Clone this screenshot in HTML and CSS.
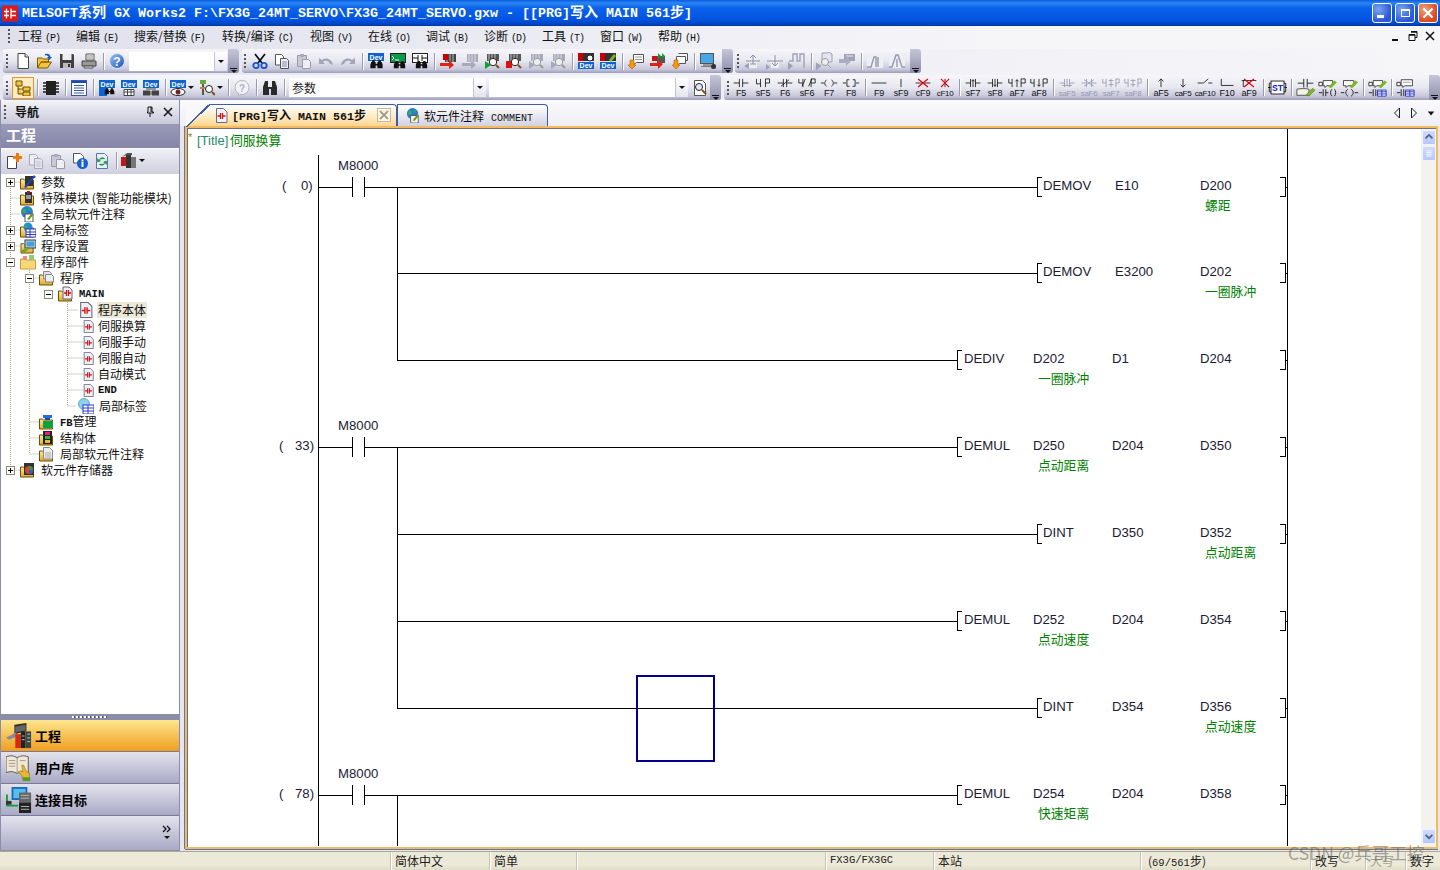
FILE: index.html
```html
<!DOCTYPE html>
<html lang="zh">
<head>
<meta charset="utf-8">
<title>MELSOFT GX Works2</title>
<link rel="stylesheet" href="styles.css">
</head>
<body>
<svg class="sprite" xmlns="http://www.w3.org/2000/svg">
  <defs>
    <linearGradient id="gHelp" x1="0" y1="0" x2="1" y2="1"><stop offset="0" stop-color="#9cc4f4"/><stop offset="1" stop-color="#1450b8"/></linearGradient>
    <linearGradient id="gFold" x1="0" y1="0" x2="0" y2="1"><stop offset="0" stop-color="#ffe9a0"/><stop offset="1" stop-color="#e0a830"/></linearGradient>
    <symbol id="bino" viewBox="0 0 16 16"><path d="M2 8h5v7H1v-4zM9 8h5l1 3v4H9zM3 6h3v2H3zM10 6h3v2h-3zM7 10h2v2H7z" fill="#111"/></symbol>
    <symbol id="devlab" viewBox="0 0 16 16"><rect width="16" height="8" fill="#0d63d0"/><text x="8" y="7" class="svgt dev">Dev</text></symbol>
    <symbol id="new" viewBox="0 0 16 16"><path d="M3 .5h7l3.500 3.500v11.500H3z" fill="#fff" stroke="#444"/><path d="M10 .5V4h3.500" fill="#ddd" stroke="#444"/></symbol>
    <symbol id="open" viewBox="0 0 16 16"><path d="M.5 15V5h5l1 1h5v3H4L.5 15h10l4-6H4" fill="#f5c53d" stroke="#7c5a00"/><path d="M8 1c3-1 5 0 5.500 3H15l-2.500 3L10 4h1.500C11 3 10 2 8 2.500z" fill="#1558c0"/></symbol>
    <symbol id="save" viewBox="0 0 16 16"><path d="M1 1h13l1 1v13H1z" fill="#3f3f3f"/><rect x="3.500" y="1" width="9" height="6" fill="#eee"/><rect x="4" y="10" width="8" height="5" fill="#bbb"/><rect x="9" y="11" width="2" height="3" fill="#333"/></symbol>
    <symbol id="print" viewBox="0 0 16 16"><path d="M5 1h8v6H5z" fill="#fff" stroke="#555"/><path d="M1 8h14v5H1z" fill="#999" stroke="#444"/><path d="M3 13h9v2H3z" fill="#ddd" stroke="#555"/><path d="M6 3h6M6 5h6" stroke="#888"/></symbol>
    <symbol id="help" viewBox="0 0 16 16"><circle cx="8" cy="8" r="7.500" fill="url(#gHelp)" stroke="#dfe8f8"/><text x="8" y="12.500" class="svgt q">?</text></symbol>
    <symbol id="cut" viewBox="0 0 16 16"><path d="M3 1l7 9M13 1L6 10" stroke="#111" stroke-width="1.800" fill="none"/><circle cx="4" cy="12.500" r="2.700" fill="none" stroke="#1a55d0" stroke-width="1.800"/><circle cx="12" cy="12.500" r="2.700" fill="none" stroke="#1a55d0" stroke-width="1.800"/></symbol>
    <symbol id="copy" viewBox="0 0 16 16"><path d="M1.500 1.500h6l2 2V12h-8z" fill="#fff" stroke="#555"/><path d="M6.500 5.500h6l2 2v8h-8z" fill="#eef" stroke="#555"/><path d="M8 9h5M8 11h5M8 13h5" stroke="#88a"/></symbol>
    <symbol id="gcopy" viewBox="0 0 16 16"><path d="M1.500 1.500h6l2 2V12h-8z" fill="#eeeef4" stroke="#a8a8b8"/><path d="M6.500 5.500h6l2 2v8h-8z" fill="#e6e6f0" stroke="#a8a8b8"/><path d="M8 9h5M8 11h5M8 13h5" stroke="#c0c0d0"/></symbol>
    <symbol id="paste" viewBox="0 0 16 16"><path d="M1.500 2.500h9v11h-9z" fill="#c9c9d6" stroke="#9a9aaa"/><path d="M4 1h4v3H4z" fill="#aaaabb"/><path d="M6.500 6.500h6l2 2v7h-8z" fill="#eeeef4" stroke="#9a9aaa"/></symbol>
    <symbol id="undo" viewBox="0 0 16 16"><path d="M1 5v6h6L5 9c2-2 5-2 7 2l3 1c-1-6-7-8-11-5z" fill="#a5a5b8"/></symbol>
    <symbol id="redo" viewBox="0 0 16 16"><path d="M15 5v6H9l2-2c-2-2-5-2-7 2l-3 1c1-6 7-8 11-5z" fill="#a5a5b8"/></symbol>
    <symbol id="devb" viewBox="0 0 16 16"><use href="#devlab" width="16" height="16"/><use href="#bino" x="1" y="2" width="15" height="14"/></symbol>
    <symbol id="termb" viewBox="0 0 16 16"><rect x=".5" y=".5" width="15" height="9" fill="#0a9a4a" stroke="#222"/><path d="M2 3l2 2-2 2M5 7h4" stroke="#fff" fill="none"/><use href="#bino" x="3" y="3" width="13" height="13"/></symbol>
    <symbol id="ladb" viewBox="0 0 16 16"><rect x=".5" y=".5" width="15" height="9" fill="#fff" stroke="#222"/><path d="M1 5h5M6 2v6M10 2v6M10 5h5" stroke="#111" fill="none"/><use href="#bino" x="3" y="3" width="13" height="13"/></symbol>
    <symbol id="rblock" viewBox="0 0 16 16"><rect x="5" y="1" width="11" height="8" fill="#444"/><path d="M7 1v8M10 1v8M13 1v8" stroke="#bbb"/><rect x="3" y="1" width="5" height="6" fill="#c00"/><path d="M0 10h9V7l5 5-5 4v-3H0z" fill="#e02010"/></symbol>
    <symbol id="gblock" viewBox="0 0 16 16"><path d="M5 1h11v8H5zM0 10h9V7l5 5-5 4v-3H0z" fill="#a8a8bc"/><path d="M7 1v8M10 1v8M13 1v8" stroke="#ddd"/></symbol>
    <symbol id="findg" viewBox="0 0 16 16"><rect x="3" y="1" width="12" height="7" fill="#555"/><path d="M5 1v7M8 1v7M11 1v7" stroke="#bbb"/><path d="M1 8l6 4-6 4z" fill="#10a030"/><circle cx="9" cy="9" r="3.700" fill="#fff" stroke="#222"/><path d="M12 12l3 3" stroke="#8a5010" stroke-width="2"/></symbol>
    <symbol id="findr" viewBox="0 0 16 16"><rect x="3" y="1" width="12" height="7" fill="#555"/><path d="M5 1v7M8 1v7M11 1v7" stroke="#bbb"/><rect x="0" y="8" width="6" height="7" fill="#e01010"/><circle cx="9" cy="9" r="3.700" fill="#fff" stroke="#222"/><path d="M12 12l3 3" stroke="#8a5010" stroke-width="2"/></symbol>
    <symbol id="findx" viewBox="0 0 16 16"><path d="M3 1h12v7H3z" fill="#a8a8bc"/><path d="M5 1v7M8 1v7M11 1v7" stroke="#ddd"/><path d="M1 8l6 4-6 4z" fill="#a8a8bc"/><circle cx="9" cy="9" r="3.700" fill="#eee" stroke="#999"/><path d="M12 12l3 3" stroke="#999" stroke-width="2"/></symbol>
    <symbol id="devr" viewBox="0 0 16 16"><rect y="0" width="16" height="8" fill="#333"/><rect width="5" height="8" fill="#c00"/><circle cx="12" cy="5" r="3" fill="#fff" stroke="#222"/><rect y="9" width="16" height="7" fill="#0d63d0"/><text x="8" y="15.300" class="svgt dev">Dev</text></symbol>
    <symbol id="devg" viewBox="0 0 16 16"><rect y="0" width="16" height="8" fill="#333"/><rect width="5" height="8" fill="#c00"/><path d="M9 7l5-6 2 2-5 6z" fill="#7ab820"/><rect y="9" width="16" height="7" fill="#0d63d0"/><text x="8" y="15.300" class="svgt dev">Dev</text></symbol>
    <symbol id="note" viewBox="0 0 16 16"><path d="M5.500 1.500h10v8h-7l-3 2z" fill="#fff" stroke="#555"/><path d="M7 4h7M7 6.500h7" stroke="#999"/><path d="M2 7h4v5h2l-4 4-4-4h2z" fill="#f59a10" stroke="#b56000" stroke-width=".6"/></symbol>
    <symbol id="rarrows" viewBox="0 0 16 16"><rect x="7" y="3" width="8" height="7" fill="#555"/><path d="M8 0l3 3-3 3zM12 0l3 3-3 3z" fill="#10a030"/><rect x="2" y="3" width="5" height="5" fill="#d01010"/><path d="M0 10h8V7l5 4-5 5v-3H0z" fill="#e02010"/></symbol>
    <symbol id="note2" viewBox="0 0 16 16"><path d="M6.500 .5h9v7h-2"  fill="#fff" stroke="#555"/><path d="M4.500 3.500h9v7h-6l-3 2z" fill="#fff" stroke="#555"/><path d="M2 7h4v5h2l-4 4-4-4h2z" fill="#f59a10" stroke="#b56000" stroke-width=".6"/></symbol>
    <symbol id="monitor" viewBox="0 0 16 16"><rect x=".5" y=".5" width="13" height="10" fill="#47a6e6" stroke="#555"/><rect x="3" y="11" width="8" height="2" fill="#999"/><path d="M1 13.500h10" stroke="#777"/><rect x="11" y="11" width="5" height="5" rx="2" fill="#333"/></symbol>
    <symbol id="gl1" viewBox="0 0 18 18"><path d="M5 2h8v14H5z" fill="#eeeef5"/><path d="M0 14l5-3v6z" fill="#a0a0b6"/><path d="M2 9h14M9 3v9M6 6l3-3 3 3M6 12h6" stroke="#8e8ea6" fill="none"/></symbol>
    <symbol id="gl2" viewBox="0 0 18 18"><path d="M5 2h8v14H5z" fill="#eeeef5"/><path d="M1 9h16M9 3v10M6 11l3 3 3-3" stroke="#8e8ea6" fill="none"/><path d="M0 12l4 3-4 3z" fill="#a0a0b6"/></symbol>
    <symbol id="gl3" viewBox="0 0 18 18"><path d="M1 9h4V2h4v7h3V2h4v14" fill="none" stroke="#a0a0b6" stroke-width="1.400"/><path d="M0 10l5 4-5 4z" fill="#a0a0b6"/></symbol>
    <symbol id="gl4" viewBox="0 0 18 18"><path d="M6 1h5l2-1 3 2v8H6z" fill="#e4e4ee" stroke="#a0a0b6"/><circle cx="9" cy="10" r="3.500" fill="#eee" stroke="#999"/><path d="M0 11l5 3-5 4zM12 13l3 3" stroke="#a0a0b6" fill="#a0a0b6"/></symbol>
    <symbol id="gl5" viewBox="0 0 18 18"><path d="M6 2h11v7H6z" fill="#a0a0b6"/><path d="M8 4h7" stroke="#eee"/><path d="M1 7h7V4l5 5-5 5v-3H1z" fill="#acacc0"/></symbol>
    <symbol id="gl6" viewBox="0 0 18 18"><rect x="1" y="1" width="16" height="15" fill="#eeeef5"/><path d="M1 15h4l3-10h2v10M12 15V5" stroke="#9898ae" fill="none" stroke-width="1.400"/></symbol>
    <symbol id="gl7" viewBox="0 0 18 18"><rect x="1" y="1" width="16" height="15" fill="#eeeef5"/><path d="M1 15h3l4-12h2l4 12h3M9 7v8" stroke="#9898ae" fill="none" stroke-width="1.400"/></symbol>
    <symbol id="proj" viewBox="0 0 16 16"><path d="M1 1h6v5H1zM8 7h7v4H8zM8 12h7v4H8zM3 6v8h5M3 9h5" fill="#f5c53d" stroke="#6a5000"/></symbol>
    <symbol id="chip" viewBox="0 0 16 16"><rect x="3" y="1" width="10" height="14" fill="#222"/><path d="M0 3h3M0 6h3M0 9h3M0 12h3M13 3h3M13 6h3M13 9h3M13 12h3" stroke="#222" stroke-width="1.500"/></symbol>
    <symbol id="list" viewBox="0 0 16 16"><rect x=".5" y=".5" width="15" height="15" fill="#fff" stroke="#3858a8"/><rect x="1" y="1" width="14" height="2" fill="#1a49b0"/><path d="M3 5.500h10M3 8h10M3 10.500h10M3 13h10" stroke="#3858a8"/></symbol>
    <symbol id="devb2" viewBox="0 0 16 16"><use href="#devlab" width="16" height="16"/><rect y="8" width="8" height="8" fill="#0d63d0"/><use href="#bino" x="5" y="3" width="11" height="13"/></symbol>
    <symbol id="devt" viewBox="0 0 16 16"><use href="#devlab" width="16" height="16"/><path d="M3 9.500h10v6H3z" fill="#fff" stroke="#444"/><path d="M3 12h10M6.500 9.500v6M10 9.500v6" stroke="#444"/></symbol>
    <symbol id="devn" viewBox="0 0 16 16"><use href="#devlab" width="16" height="16"/><path d="M0 11h7v4H0zM9 11h7v4H9zM3 9h10" fill="#444" stroke="#444"/></symbol>
    <symbol id="deve" viewBox="0 0 16 16"><use href="#devlab" width="16" height="16"/><ellipse cx="8" cy="12" rx="7" ry="3.500" fill="#fff" stroke="#222"/><circle cx="8" cy="12" r="2.500" fill="#722"/></symbol>
    <symbol id="probe" viewBox="0 0 16 16"><rect x="1" y="0" width="6" height="4" fill="#6a4"/><path d="M3 4h2v11H3z" fill="#555"/><rect x="1" y="7" width="6" height="2" fill="#b85"/><circle cx="10" cy="9" r="3.500" fill="#fff" stroke="#222"/><path d="M13 12l3 3" stroke="#7a5010" stroke-width="2"/></symbol>
    <symbol id="ghelp" viewBox="0 0 16 16"><circle cx="8" cy="7.500" r="7" fill="#f2f2f7" stroke="#b4b4c6"/><path d="M5 13l-1 3 4-2" fill="#f2f2f7" stroke="#b4b4c6"/><text x="8" y="11.500" class="svgt gq">?</text></symbol>
    <symbol id="bino2" viewBox="0 0 16 16"><path d="M1 7l2-6h3v6h4V1h3l2 6v8H9V9H7v6H1z" fill="#2a2a2a"/></symbol>
    <symbol id="findp" viewBox="0 0 16 16"><path d="M2.500 .5h8l3 3v12h-11z" fill="#fff" stroke="#555"/><circle cx="7" cy="7" r="3.500" fill="#dfeaff" stroke="#222"/><path d="M10 10l4 4" stroke="#8a5010" stroke-width="2"/></symbol>

    <symbol id="k-c" viewBox="0 0 22 12"><path d="M2 6h7M9 1v10M13 1v10M13 6h7" stroke="#111" fill="none"/></symbol>
    <symbol id="k-n" viewBox="0 0 22 12"><path d="M3 1v6h5M8 1v10M14 1v10M14 1h5v5h-5" stroke="#111" fill="none"/></symbol>
    <symbol id="k-p" viewBox="0 0 22 12"><path d="M2 6h7M9 1v10M13 1v10M13 6h7M6 10l10-8" stroke="#111" fill="none"/></symbol>
    <symbol id="k-q" viewBox="0 0 22 12"><path d="M1 1v5h5M6 1v10M9 1l-4 9M13 10l4-9M16 1v10M16 1h5v5h-5" stroke="#111" fill="none"/></symbol>
    <symbol id="k-o" viewBox="0 0 22 12"><path d="M1 6h4M8 2C5 5 5 8 8 10M14 2c3 3 3 6 0 8M17 6h4" stroke="#111" fill="none"/></symbol>
    <symbol id="k-a" viewBox="0 0 22 12"><path d="M1 6h4M9 2H6v8h3M13 2h3v8h-3M17 6h4" stroke="#111" fill="none"/></symbol>
    <symbol id="k-h" viewBox="0 0 22 12"><path d="M2 6h18" stroke="#111" fill="none"/></symbol>
    <symbol id="k-v" viewBox="0 0 22 12"><path d="M11 1v10" stroke="#111" fill="none"/></symbol>
    <symbol id="k-hx" viewBox="0 0 22 12"><path d="M2 6h18" stroke="#111"/><path d="M5 1l12 10M17 1L5 11" stroke="#e00010" stroke-width="1.500"/></symbol>
    <symbol id="k-vx" viewBox="0 0 22 12"><path d="M11 1v10" stroke="#111"/><path d="M6 1l10 10M16 1L6 11" stroke="#e00010" stroke-width="1.500"/></symbol>
    <symbol id="k-u" viewBox="0 0 22 12"><path d="M2 6h6M8 1v10M14 1v10M14 6h6M11 11V2M9 4l2-2 2 2" stroke="#111" fill="none"/></symbol>
    <symbol id="k-d" viewBox="0 0 22 12"><path d="M2 6h6M8 1v10M14 1v10M14 6h6M11 1v9M9 8l2 2 2-2" stroke="#111" fill="none"/></symbol>
    <symbol id="k-nu" viewBox="0 0 22 12"><path d="M1 1v5h4M5 1v10M16 1v10M16 1h5v5h-5M11 11V2M9 4l2-2 2 2" stroke="#111" fill="none"/></symbol>
    <symbol id="k-nd" viewBox="0 0 22 12"><path d="M1 1v5h4M5 1v10M16 1v10M16 1h5v5h-5M11 1v9M9 8l2 2 2-2" stroke="#111" fill="none"/></symbol>
    <symbol id="k-g" viewBox="0 0 22 12"><path d="M2 6h6M8 1v10M14 1v10M14 6h6M5 9h12M11 1v9" stroke="#9898ae" fill="none"/></symbol>
    <symbol id="k-g2" viewBox="0 0 22 12"><path d="M2 6h6M8 1v10M14 1v10M14 6h6M5 10l12-8M5 2l12 8" stroke="#9898ae" fill="none"/></symbol>
    <symbol id="k-g3" viewBox="0 0 22 12"><path d="M1 1v5h4M5 1v10M17 1v10M17 1h4v5h-4M8 3h6M8 8h6M11 1v10" stroke="#9898ae" fill="none"/></symbol>
    <symbol id="k-up" viewBox="0 0 22 12"><path d="M11 11V1M8 4l3-3 3 3" stroke="#111" fill="none"/></symbol>
    <symbol id="k-dn" viewBox="0 0 22 12"><path d="M11 1v10M8 8l3 3 3-3" stroke="#111" fill="none"/></symbol>
    <symbol id="k-sl" viewBox="0 0 22 12"><path d="M2 6h7l6-5M15 6h5" stroke="#111" fill="none"/></symbol>
    <symbol id="k-l" viewBox="0 0 22 12"><path d="M4 1v8h15" stroke="#111" fill="none"/></symbol>
    <symbol id="k-tx" viewBox="0 0 22 12"><path d="M2 3h18M4 3v8" stroke="#111" fill="none"/><path d="M5 1l12 10M17 1L5 11" stroke="#e00010" stroke-width="1.500"/></symbol>
    <symbol id="k-st" viewBox="0 0 22 22"><path d="M0 11h3M19 11h3" stroke="#111"/><rect x="3.500" y="3.500" width="15" height="15" fill="#fff" stroke="#111"/><path d="M3.500 6h-2v10h2M18.500 6h2v10h-2" fill="none" stroke="#111"/><text x="11" y="15" class="svgt st">ST</text></symbol>
    <symbol id="k-pc" viewBox="0 0 22 22"><path d="M2 6h7M9 1v10M13 1v10M13 6h7" stroke="#111" fill="none"/><path d="M1 13c5-1 10-1 14 0v7H1z" fill="#f2f2ea" stroke="#444"/><path d="M12 19l7-7 3 2-7 7z" fill="#7ab820" stroke="#3a6a00" stroke-width=".5"/></symbol>
    <symbol id="k-cm1" viewBox="0 0 22 22"><path d="M1 5h4v4H1z" fill="#fff" stroke="#222"/><path d="M6 3h11v6H10l-2 2V9H6z" fill="#fff" stroke="#333"/><path d="M12 10l7-7 3 2-7 7z" fill="#7ab820"/><path d="M1 17h4M6 13v8M9 13v8M9 17h3M16 13c-2 2-2 6 0 8M19 13c2 2 2 6 0 8" stroke="#111" fill="none"/></symbol>
    <symbol id="k-cm2" viewBox="0 0 22 22"><path d="M4 3h12v6H9l-2 2V9H4z" fill="#fff" stroke="#333"/><path d="M11 10l7-7 3 2-7 7z" fill="#7ab820"/><path d="M1 17h4M9 13c-3 2-3 6 0 8M13 13c3 2 3 6 0 8M17 17h4" stroke="#111" fill="none"/></symbol>
    <symbol id="k-cm3" viewBox="0 0 22 22"><path d="M1 5h4v4H1z" fill="#fff" stroke="#222"/><path d="M6 3h11v6H10l-2 2V9H6z" fill="#fff" stroke="#333"/><path d="M12 10l7-7 3 2-7 7z" fill="#7ab820"/><path d="M1 17h4M6 13v8M9 13v8" stroke="#111" fill="none"/><path d="M11 14h10v7H11z" fill="#fff" stroke="#1a2ac0"/><path d="M11 16h10M11 18.500h10M16 14v7" stroke="#1a2ac0"/></symbol>
    <symbol id="k-cm4" viewBox="0 0 22 22"><path d="M1 5h4v4H1z" fill="#fff" stroke="#222"/><path d="M6 2h13v7H10l-2 2V9H6z" fill="#fff" stroke="#333"/><path d="M8 5h9" stroke="#999"/><path d="M1 17h4M6 13v8M9 13v8" stroke="#111" fill="none"/><path d="M11 14h10v7H11z" fill="#fff" stroke="#1a2ac0"/><path d="M11 16h10M11 18.500h10M16 14v7" stroke="#1a2ac0"/></symbol>

    <symbol id="fold" viewBox="0 0 16 16"><path d="M.5 15V5h3l1 1h9v9z" fill="url(#gFold)" stroke="#6a5000"/></symbol>
    <symbol id="doc" viewBox="0 0 12 15"><path d="M1 .5h7l3.500 3.500v10.500H1z" fill="#f0f0f8" stroke="#6a6a80"/><path d="M2 8h3M7 8h3M5 5v6M7 5v6" stroke="#d81010" stroke-width="1.300"/></symbol>
    <symbol id="t-param" viewBox="0 0 16 16"><use href="#fold" width="16" height="16"/><rect x="5" y="2" width="8" height="10" fill="#333"/><path d="M4 13l8-9 2-3 2 2-3 2-7 9z" fill="#1a48c8"/></symbol>
    <symbol id="t-mod" viewBox="0 0 16 16"><use href="#fold" width="16" height="16"/><rect x="5" y="2" width="7" height="11" fill="#333"/><rect x="7" y="1" width="3" height="2" fill="#d01010"/><rect x="6" y="5" width="5" height="4" fill="#999"/></symbol>
    <symbol id="t-glob" viewBox="0 0 16 16"><circle cx="7" cy="6" r="6" fill="#2a78d8"/><path d="M3 3c3-1 4 1 3 3s-3 1-4 0M8 1c2 1 3 2 3 4-2 0-3-2-3-4" fill="#30b050"/><path d="M5 8h8v8H5z" fill="#fff" stroke="#555"/><path d="M7 13l5-6 2 1-5 6z" fill="#6a9a20"/></symbol>
    <symbol id="t-label" viewBox="0 0 16 16"><use href="#fold" width="16" height="16"/><circle cx="8" cy="5" r="4.500" fill="#2a88d8"/><path d="M5 3c2-1 3 0 2 2s-2 1-3 0" fill="#30b050"/><rect x="6" y="7" width="10" height="8" fill="#fff" stroke="#2a3ac0"/><path d="M6 10h10M6 12.500h10M10 7v8" stroke="#2a3ac0"/></symbol>
    <symbol id="t-set" viewBox="0 0 16 16"><use href="#fold" y="1" width="16" height="15"/><rect x="5" y="2" width="11" height="8" fill="#cfd8e0" stroke="#333"/><rect x="6.500" y="3.500" width="8" height="5" fill="#40a0e0"/><path d="M1 13l6-4 2 2-5 4z" fill="#70a820"/></symbol>
    <symbol id="t-parts" viewBox="0 0 16 16"><path d="M.5 15V5h5l1 1h9v9z" fill="#f7d778" stroke="#c9a040"/><path d="M3 2h4v4H3z" fill="#e88a80"/><path d="M9 1h5v5H9z" fill="#8ccc78"/></symbol>
    <symbol id="t-prog" viewBox="0 0 16 16"><use href="#fold" width="16" height="16"/><path d="M4.500 1.500h6l2 2V9h-8z" fill="#dfe0ea" stroke="#888"/><path d="M6.500 4.500h6l2 2V12h-8z" fill="#eee" stroke="#888"/></symbol>
    <symbol id="t-main" viewBox="0 0 16 16"><use href="#fold" width="16" height="16"/><path d="M5 1h6l3 3v9H5z" fill="#f0f0f8" stroke="#666"/><path d="M6 7h2.500M10.500 7H13M8.500 4v6M10.500 4v6" stroke="#d01010" stroke-width="1.300"/></symbol>
    <symbol id="t-lab2" viewBox="0 0 16 16"><circle cx="6" cy="6" r="5.500" fill="#8ad0f0" stroke="#70a8c8"/><rect x="5" y="7" width="11" height="9" fill="#fff" stroke="#2a3ac0"/><path d="M5 10h11M5 13h11M10 7v9" stroke="#2a3ac0"/></symbol>
    <symbol id="t-fb" viewBox="0 0 16 16"><use href="#fold" width="16" height="16"/><rect x="4" y="1" width="9" height="3" fill="#2a6ae0"/><rect x="6" y="4" width="5" height="2" fill="#1a48a0"/><path d="M4 7h10v7H4z" fill="#10a040"/></symbol>
    <symbol id="t-struct" viewBox="0 0 16 16"><use href="#fold" width="16" height="16"/><rect x="4" y="1" width="9" height="13" fill="#222"/><rect x="6" y="2" width="5" height="3" fill="#e02080"/><rect x="6" y="6" width="5" height="3" fill="#30b040"/><rect x="6" y="10" width="5" height="3" fill="#e8c020"/></symbol>
    <symbol id="t-lcom" viewBox="0 0 16 16"><use href="#fold" width="16" height="16"/><path d="M4.500 1.500h6l3 3V13h-9z" fill="#eee" stroke="#888"/><path d="M6 7h6M6 9h6M6 11h6" stroke="#aaa"/></symbol>
    <symbol id="t-mem" viewBox="0 0 16 16"><use href="#fold" width="16" height="16"/><rect x="4" y="1" width="10" height="12" fill="#333"/><circle cx="9" cy="8" r="4" fill="#e04030"/><path d="M9 8V4a4 4 0 0 1 4 4z" fill="#30a040"/><path d="M9 8h4a4 4 0 0 1-4 4z" fill="#2a60d0"/></symbol>

    <symbol id="n-proj" viewBox="0 0 28 28"><path d="M9 2l13-2v9L9 12z" fill="#333"/><path d="M0 16l11-6v5l-8 3z" fill="#8a8a96"/><path d="M10 4l11-2v6L10 10z" fill="#666"/><rect x="10" y="12" width="6" height="15" fill="#d82a10"/><rect x="16" y="9" width="5" height="18" fill="#222"/><rect x="21" y="9" width="6" height="18" fill="#444"/><path d="M23 12h3M23 16h3M23 20h3M17 14h3M17 18h3" stroke="#8dd"/></symbol>
    <symbol id="n-lib" viewBox="0 0 28 28"><path d="M0 2c5-2 9-1 12 1 3-2 7-3 12-1v17c-5-2-9-1-12 1-3-2-7-3-12-1z" fill="#efe8d8" stroke="#5a5040"/><path d="M12 3v17M3 6h7M3 9h7M3 12h7M15 6h6" stroke="#a09880"/><path d="M19 11l3 7 3 1v7h-7l-1-4-4-4 3-1 2 1-1-7z" fill="#e8b830" stroke="#8a6a10" stroke-width=".6"/><rect x="18" y="24" width="8" height="4" fill="#5a9a20"/></symbol>
    <symbol id="n-conn" viewBox="0 0 28 28"><rect x="6" y="0" width="17" height="14" fill="#1e6ab8"/><rect x="8" y="2" width="13" height="10" fill="#50c0f0"/><path d="M1 8v12h12" fill="none" stroke="#10a030" stroke-width="2"/><path d="M0 15h6v4H0z" fill="#333"/><rect x="14" y="6" width="13" height="12" fill="#666"/><rect x="14" y="17" width="13" height="11" fill="#222"/><path d="M16 9h9M16 12h9M16 21h9M16 24h9" stroke="#bbb"/></symbol>
  </defs>
</svg>

<div class="window">
  <header class="titlebar">
    <svg class="applogo" viewBox="0 0 16 16"><rect width="16" height="16" fill="#e01818"/><path d="M2 6h5M4.500 3v10M9 3v10M9 6h5M9 10h5M2 10h5" stroke="#fff" stroke-width="1.300"/></svg>
    <span class="titletext">MELSOFT<b>系列</b> GX Works2 F:\FX3G_24MT_SERVO\FX3G_24MT_SERVO.gxw - [[PRG]<b>写入</b> MAIN 561<b>步</b>]</span>
    <div class="winbtns">
      <span class="wb"><i class="g-min"></i></span>
      <span class="wb"><i class="g-res"></i></span>
      <span class="wb close"><svg viewBox="0 0 20 20"><path d="M5 5l10 10M15 5L5 15" stroke="#fff" stroke-width="2.400"/></svg></span>
    </div>
  </header>

  <nav class="menubar">
    <i class="dots"></i>
    <span class="mi">工程<em>(P)</em></span>
    <span class="mi">编辑<em>(E)</em></span>
    <span class="mi">搜索/替换<em>(F)</em></span>
    <span class="mi">转换/编译<em>(C)</em></span>
    <span class="mi">视图<em>(V)</em></span>
    <span class="mi">在线<em>(O)</em></span>
    <span class="mi">调试<em>(B)</em></span>
    <span class="mi">诊断<em>(D)</em></span>
    <span class="mi">工具<em>(T)</em></span>
    <span class="mi">窗口<em>(W)</em></span>
    <span class="mi">帮助<em>(H)</em></span>
    <div class="mdi">
      <svg viewBox="0 0 12 12"><path d="M2 10h6" stroke="#111" stroke-width="2"/></svg>
      <svg viewBox="0 0 12 12"><path d="M4 1.500h6v6H8M2 4.500h6v6H2z" fill="none" stroke="#111"/><path d="M4 2h6M2 5h6" stroke="#111" stroke-width="1.500"/></svg>
      <svg viewBox="0 0 12 12"><path d="M2 2l8 8M10 2l-8 8" stroke="#111" stroke-width="1.500"/></svg>
    </div>
  </nav>

  <div class="tbrow one">
    <div class="tb w1">
      <i class="dots"></i>
      <span class="b"><svg><use href="#new"/></svg></span>
      <span class="b"><svg><use href="#open"/></svg></span>
      <span class="b"><svg><use href="#save"/></svg></span>
      <span class="b"><svg><use href="#print"/></svg></span>
      <i class="sep"></i>
      <span class="b"><svg><use href="#help"/></svg></span>
      <div class="combo c1"><span class="cv"></span><span class="ca"></span></div>
      <i class="chev"></i>
    </div>
    <div class="tb w2">
      <i class="dots"></i>
      <span class="b"><svg><use href="#cut"/></svg></span>
      <span class="b"><svg><use href="#copy"/></svg></span>
      <span class="b"><svg><use href="#paste"/></svg></span>
      <span class="b"><svg><use href="#undo"/></svg></span>
      <span class="b"><svg><use href="#redo"/></svg></span>
      <i class="sep"></i>
      <span class="b"><svg><use href="#devb"/></svg></span>
      <span class="b"><svg><use href="#termb"/></svg></span>
      <span class="b"><svg><use href="#ladb"/></svg></span>
      <i class="sep"></i>
      <span class="b"><svg><use href="#rblock"/></svg></span>
      <span class="b"><svg><use href="#gblock"/></svg></span>
      <span class="b"><svg><use href="#findg"/></svg></span>
      <span class="b"><svg><use href="#findr"/></svg></span>
      <span class="b"><svg><use href="#findx"/></svg></span>
      <span class="b"><svg><use href="#findx"/></svg></span>
      <i class="sep"></i>
      <span class="b"><svg><use href="#devr"/></svg></span>
      <span class="b"><svg><use href="#devg"/></svg></span>
      <i class="sep"></i>
      <span class="b"><svg><use href="#note"/></svg></span>
      <span class="b"><svg><use href="#rarrows"/></svg></span>
      <span class="b"><svg><use href="#note2"/></svg></span>
      <i class="sep"></i>
      <span class="b"><svg><use href="#monitor"/></svg></span>
      <i class="chev"></i>
    </div>
    <div class="tb w3">
      <i class="dots"></i>
      <span class="b big"><svg><use href="#gl1"/></svg></span>
      <span class="b big"><svg><use href="#gl2"/></svg></span>
      <span class="b big"><svg><use href="#gl3"/></svg></span>
      <i class="sep"></i>
      <span class="b big"><svg><use href="#gl4"/></svg></span>
      <span class="b big"><svg><use href="#gl5"/></svg></span>
      <i class="sep"></i>
      <span class="b big"><svg><use href="#gl6"/></svg></span>
      <span class="b big"><svg><use href="#gl7"/></svg></span>
      <i class="chev"></i>
    </div>
  </div>

  <div class="tbrow two">
    <div class="tb w4">
      <i class="dots"></i>
      <span class="b sel"><svg><use href="#proj"/></svg></span>
      <i class="sep"></i>
      <span class="b"><svg><use href="#chip"/></svg></span>
      <i class="sep"></i>
      <span class="b"><svg><use href="#list"/></svg></span>
      <i class="sep"></i>
      <span class="b"><svg><use href="#devb2"/></svg></span>
      <span class="b"><svg><use href="#devt"/></svg></span>
      <span class="b"><svg><use href="#devn"/></svg></span>
      <i class="sep"></i>
      <span class="b dd"><svg><use href="#deve"/></svg><i class="tri"></i></span>
      <span class="b dd"><svg><use href="#probe"/></svg><i class="tri"></i></span>
      <i class="sep"></i>
      <span class="b"><svg><use href="#ghelp"/></svg></span>
      <i class="sep"></i>
      <span class="b"><svg><use href="#bino2"/></svg></span>
      <i class="sep"></i>
      <div class="combo c2"><span class="cv">参数</span><span class="ca"></span></div>
      <div class="combo c3"><span class="cv"></span><span class="ca"></span></div>
      <span class="b"><svg><use href="#findp"/></svg></span>
      <i class="chev"></i>
    </div>
    <div class="tb w5">
      <i class="dots"></i>
      <span class="k"><svg><use href="#k-c"/></svg><small>F5</small></span>
      <span class="k"><svg><use href="#k-n"/></svg><small>sF5</small></span>
      <span class="k"><svg><use href="#k-p"/></svg><small>F6</small></span>
      <span class="k"><svg><use href="#k-q"/></svg><small>sF6</small></span>
      <span class="k"><svg><use href="#k-o"/></svg><small>F7</small></span>
      <span class="k"><svg><use href="#k-a"/></svg><small>F8</small></span>
      <i class="sep"></i>
      <span class="k"><svg><use href="#k-h"/></svg><small>F9</small></span>
      <span class="k"><svg><use href="#k-v"/></svg><small>sF9</small></span>
      <span class="k"><svg><use href="#k-hx"/></svg><small>cF9</small></span>
      <span class="k"><svg><use href="#k-vx"/></svg><small class="tiny">cF10</small></span>
      <i class="sep"></i>
      <span class="k"><svg><use href="#k-u"/></svg><small>sF7</small></span>
      <span class="k"><svg><use href="#k-d"/></svg><small>sF8</small></span>
      <span class="k"><svg><use href="#k-nu"/></svg><small>aF7</small></span>
      <span class="k"><svg><use href="#k-nd"/></svg><small>aF8</small></span>
      <i class="sep"></i>
      <span class="k off"><svg><use href="#k-g"/></svg><small class="tiny">saF5</small></span>
      <span class="k off"><svg><use href="#k-g2"/></svg><small class="tiny">saF6</small></span>
      <span class="k off"><svg><use href="#k-g3"/></svg><small class="tiny">saF7</small></span>
      <span class="k off"><svg><use href="#k-g3"/></svg><small class="tiny">saF8</small></span>
      <i class="sep"></i>
      <span class="k"><svg><use href="#k-up"/></svg><small>aF5</small></span>
      <span class="k"><svg><use href="#k-dn"/></svg><small class="tiny">caF5</small></span>
      <span class="k"><svg><use href="#k-sl"/></svg><small class="tiny">caF10</small></span>
      <span class="k"><svg><use href="#k-l"/></svg><small>F10</small></span>
      <span class="k"><svg><use href="#k-tx"/></svg><small>aF9</small></span>
      <i class="sep"></i>
      <span class="b lg"><svg><use href="#k-st"/></svg></span>
      <i class="sep"></i>
      <span class="b lg"><svg><use href="#k-pc"/></svg></span>
      <span class="b lg"><svg><use href="#k-cm1"/></svg></span>
      <span class="b lg"><svg><use href="#k-cm2"/></svg></span>
      <i class="sep"></i>
      <span class="b lg"><svg><use href="#k-cm3"/></svg></span>
      <i class="sep"></i>
      <span class="b lg"><svg><use href="#k-cm4"/></svg></span>
      <i class="chev right"></i>
    </div>
  </div>

  <main class="main">
    <aside class="nav">
      <div class="navhead">
        <i class="dots"></i><strong>导航</strong>
        <svg class="pin" viewBox="0 0 10 12"><path d="M3 1h4v5h1.500v1h-6V6H3zM5 7v4M6 1v5" stroke="#111" fill="none"/></svg>
        <svg class="navx" viewBox="0 0 10 10"><path d="M1 1l8 8M9 1L1 9" stroke="#111" stroke-width="1.500"/></svg>
      </div>
      <div class="navtitle">工程</div>
      <div class="navtools">
        <span class="n"><svg viewBox="0 0 16 16"><path d="M1.500 3.500h9v12h-9z" fill="#fff" stroke="#444"/><path d="M10 0h3v3h3v3h-3v3h-3V6H7V3h3z" fill="#f07a10"/></svg></span>
        <span class="n"><svg><use href="#gcopy"/></svg></span>
        <span class="n"><svg><use href="#paste"/></svg></span>
        <span class="n"><svg viewBox="0 0 16 16"><path d="M1.500 .5h7l3 3V10h-10z" fill="#fff" stroke="#555"/><circle cx="10.500" cy="10.500" r="5.500" fill="#1560d0"/><rect x="9.500" y="9" width="2" height="5" fill="#fff"/><rect x="9.500" y="6.500" width="2" height="2" fill="#fff"/></svg></span>
        <span class="n"><svg viewBox="0 0 16 16"><path d="M2.500 .5h8l3 3v12h-11z" fill="#eaf0fb" stroke="#5a78b0"/><path d="M11 6A3.500 3.500 0 0 0 5 7l1.500 1-3 1V5.500l1 1M5 11a3.500 3.500 0 0 0 6-1l-1.500-1 3-1v3.500l-1-1" fill="#20a040" stroke="#107030" stroke-width=".5"/></svg></span>
        <i class="sep"></i>
        <span class="n wide"><svg viewBox="0 0 16 16"><rect x="0" y="4" width="5" height="9" fill="#c01818"/><rect x="5" y="2" width="5" height="13" fill="#333"/><rect x="10" y="4" width="5" height="11" fill="#777"/><path d="M1 4l5-4h5v2H6z" fill="#555"/></svg><i class="tri"></i></span>
      </div>
      <div class="tree">
        <svg class="treelines" viewBox="0 0 180 310">
          <path d="M10.500 8V296M10.500 8H20M10.500 24H20M10.500 40H20M10.500 56H20M10.500 72H20M29.500 96V280M29.500 104H39M29.500 248H39M29.500 264H39M29.500 280H39M67.500 128V232H76M67.500 136H78M67.500 152H84M67.500 168H84M67.500 184H84M67.500 200H84M67.500 216H84M10.500 296H20"/>
        </svg>
        <div class="row l0"><i class="exp plus"></i><svg><use href="#t-param"/></svg><span>参数</span></div>
        <div class="row l0"><i class="exp none"></i><svg><use href="#t-mod"/></svg><span>特殊模块 (智能功能模块)</span></div>
        <div class="row l0"><i class="exp none"></i><svg><use href="#t-glob"/></svg><span>全局软元件注释</span></div>
        <div class="row l0"><i class="exp plus"></i><svg><use href="#t-label"/></svg><span>全局标签</span></div>
        <div class="row l0"><i class="exp plus"></i><svg><use href="#t-set"/></svg><span>程序设置</span></div>
        <div class="row l0"><i class="exp minus"></i><svg><use href="#t-parts"/></svg><span>程序部件</span></div>
        <div class="row l1"><i class="exp minus"></i><svg><use href="#t-prog"/></svg><span>程序</span></div>
        <div class="row l2"><i class="exp minus"></i><svg><use href="#t-main"/></svg><span class="mono">MAIN</span></div>
        <div class="row l3"><svg><use href="#doc"/></svg><span class="current">程序本体</span></div>
        <div class="row l3 sub"><svg><use href="#doc"/></svg><span>伺服换算</span></div>
        <div class="row l3 sub"><svg><use href="#doc"/></svg><span>伺服手动</span></div>
        <div class="row l3 sub"><svg><use href="#doc"/></svg><span>伺服自动</span></div>
        <div class="row l3 sub"><svg><use href="#doc"/></svg><span>自动模式</span></div>
        <div class="row l3 sub"><svg><use href="#doc"/></svg><span class="mono">END</span></div>
        <div class="row l3"><svg><use href="#t-lab2"/></svg><span>局部标签</span></div>
        <div class="row l1"><i class="exp none"></i><svg><use href="#t-fb"/></svg><span><em class="mono">FB</em>管理</span></div>
        <div class="row l1"><i class="exp none"></i><svg><use href="#t-struct"/></svg><span>结构体</span></div>
        <div class="row l1"><i class="exp none"></i><svg><use href="#t-lcom"/></svg><span>局部软元件注释</span></div>
        <div class="row l0"><i class="exp plus"></i><svg><use href="#t-mem"/></svg><span>软元件存储器</span></div>
      </div>
      <div class="splitter"></div>
      <div class="navbtn on"><svg><use href="#n-proj"/></svg><strong>工程</strong></div>
      <div class="navbtn"><svg><use href="#n-lib"/></svg><strong>用户库</strong></div>
      <div class="navbtn"><svg><use href="#n-conn"/></svg><strong>连接目标</strong></div>
      <div class="navbtn foot"><svg class="more" viewBox="0 0 10 16"><path d="M1 1l3 3-3 3M5 1l3 3-3 3" fill="none" stroke="#111" stroke-width="1.300"/><path d="M2 11h6l-3 3z" fill="#111"/></svg></div>
    </aside>

    <section class="editor">
      <div class="tabs">
        <div class="tab active">
          <svg class="tabdoc"><use href="#doc"/></svg>
          <span class="tabt"><b>[PRG]</b>写入<b> MAIN 561</b>步</span>
          <i class="tabx"><svg viewBox="0 0 10 10"><path d="M1 1l8 8M9 1L1 9" stroke="#a8a08a" stroke-width="2"/></svg></i>
        </div>
        <div class="tab">
          <svg class="tabdoc"><use href="#t-glob"/></svg>
          <span class="tabt">软元件注释<b class="thin">COMMENT</b></span>
        </div>
        <div class="tabnav">
          <svg viewBox="0 0 8 12"><path d="M6.500 1L1.500 6l5 5z" fill="none" stroke="#222"/></svg>
          <svg viewBox="0 0 8 12"><path d="M1.500 1l5 5-5 5z" fill="none" stroke="#222"/></svg>
          <svg viewBox="0 0 10 12"><path d="M1 4h8L5 9z" fill="#111"/></svg>
        </div>
      </div>
      <div class="frame">
        <svg class="ladder" viewBox="188 129 1233 718" preserveAspectRatio="xMinYMin">
          <g class="w">
            <path d="M318.500 155V846M1287.500 129V846"/>
            <path d="M318 187.500H352M364 187.500H1037M397.500 187V360M397 273.500H1037M397 360.500H957"/>
            <path d="M352.500 177V197M364.500 177V197"/>
            <path d="M318 447.500H352M364 447.500H957M397.500 447V708M397 534.500H1037M397 621.500H957M397 708.500H1037"/>
            <path d="M352.500 437V457M364.500 437V457"/>
            <path d="M318 795.500H352M364 795.500H957M397.500 795V846"/>
            <path d="M352.500 785V805M364.500 785V805"/>
            <path d="M1042 177.500H1037.500V196.500H1042M1280 177.500H1285.500V196.500H1280M1286 187.500H1287"/>
            <path d="M1042 263.500H1037.500V282.500H1042M1280 263.500H1285.500V282.500H1280M1286 273.500H1287"/>
            <path d="M962 350.500H957.500V369.500H962M1280 350.500H1285.500V369.500H1280M1286 360.500H1287"/>
            <path d="M962 437.500H957.500V456.500H962M1280 437.500H1285.500V456.500H1280M1286 447.500H1287"/>
            <path d="M1042 524.500H1037.500V543.500H1042M1280 524.500H1285.500V543.500H1280M1286 534.500H1287"/>
            <path d="M962 611.500H957.500V630.500H962M1280 611.500H1285.500V630.500H1280M1286 621.500H1287"/>
            <path d="M1042 698.500H1037.500V717.500H1042M1280 698.500H1285.500V717.500H1280M1286 708.500H1287"/>
            <path d="M962 785.500H957.500V804.500H962M1280 785.500H1285.500V804.500H1280M1286 795.500H1287"/>
          </g>
          <rect class="cursor" x="637" y="676" width="77" height="85"/>
          <text class="star" x="188" y="141">*</text>
          <text class="ttl" x="197" y="145">[Title]</text>
          <text class="cm" x="230" y="145">伺服换算</text>

          <g class="t">
            <text x="282" y="190">(</text><text x="301" y="190">0)</text>
            <text x="279" y="450">(</text><text x="295" y="450">33)</text>
            <text x="279" y="798">(</text><text x="295" y="798">78)</text>
            <text x="338" y="170">M8000</text><text x="338" y="430">M8000</text><text x="338" y="778">M8000</text>

            <text x="1043" y="190">DEMOV</text><text x="1115" y="190">E10</text><text x="1200" y="190">D200</text>
            <text x="1043" y="276">DEMOV</text><text x="1115" y="276">E3200</text><text x="1200" y="276">D202</text>
            <text x="964" y="363">DEDIV</text><text x="1033" y="363">D202</text><text x="1112" y="363">D1</text><text x="1200" y="363">D204</text>
            <text x="964" y="450">DEMUL</text><text x="1033" y="450">D250</text><text x="1112" y="450">D204</text><text x="1200" y="450">D350</text>
            <text x="1043" y="537">DINT</text><text x="1112" y="537">D350</text><text x="1200" y="537">D352</text>
            <text x="964" y="624">DEMUL</text><text x="1033" y="624">D252</text><text x="1112" y="624">D204</text><text x="1200" y="624">D354</text>
            <text x="1043" y="711">DINT</text><text x="1112" y="711">D354</text><text x="1200" y="711">D356</text>
            <text x="964" y="798">DEMUL</text><text x="1033" y="798">D254</text><text x="1112" y="798">D204</text><text x="1200" y="798">D358</text>
          </g>
          <g class="cm">
            <text x="1205" y="210">螺距</text>
            <text x="1205" y="296">一圈脉冲</text>
            <text x="1038" y="383">一圈脉冲</text>
            <text x="1038" y="470">点动距离</text>
            <text x="1205" y="557">点动距离</text>
            <text x="1038" y="644">点动速度</text>
            <text x="1205" y="731">点动速度</text>
            <text x="1038" y="818">快速矩离</text>
          </g>
        </svg>
        <div class="vscroll">
          <span class="sb"><svg viewBox="0 0 14 14"><path d="M3 8l4-4 4 4" fill="none" stroke="#4d6185" stroke-width="2"/></svg></span>
          <span class="sb thumb"><svg viewBox="0 0 14 14"><path d="M4 4h6M4 6h6M4 8h6M4 10h6" stroke="#fff"/></svg></span>
          <span class="track"></span>
          <span class="sb"><svg viewBox="0 0 14 14"><path d="M3 5l4 4 4-4" fill="none" stroke="#4d6185" stroke-width="2"/></svg></span>
        </div>
      </div>
    </section>
  </main>

  <footer class="status">
    <span class="s s0"></span>
    <span class="s s1">简体中文</span>
    <span class="s s2">简单</span>
    <span class="s s3"></span>
    <span class="s s4 mono">FX3G/FX3GC</span>
    <span class="s s5">本站</span>
    <span class="s s6">(<em class="mono">69/561</em>步)</span>
    <span class="s s8">改写</span>
    <span class="s s9">大写</span>
    <span class="s s10">数字</span>
    <div class="wm">CSDN @兵哥工控</div>
  </footer>
</div>
</body>
</html>
```

FILE: styles.css
```css
html, body {
  margin: 0;
  padding: 0;
  width: 1440px;
  height: 870px;
  overflow: hidden;
  background: #ece9d8;
}
body, .svgt {
  font-family: "Noto Sans CJK SC", "Liberation Sans", sans-serif;
}
.sprite { position: absolute; width: 0; height: 0; }
.svgt.dev { font: bold 7px "Liberation Sans", sans-serif; fill: #fff; text-anchor: middle; }
.svgt.q { font: bold 12px "Liberation Sans", sans-serif; fill: #fff; text-anchor: middle; }
.svgt.gq { font: bold 10px "Liberation Sans", sans-serif; fill: #b0b0c4; text-anchor: middle; }
.svgt.st { font: bold 10px "Liberation Sans", sans-serif; fill: #1020e0; text-anchor: middle; }
em { font-style: normal; }
.mono { font-family: "Liberation Mono", monospace; font-weight: bold; font-size: 10.500px; }

.window { width: 1440px; height: 870px; display: flex; flex-direction: column; }

/* Title bar */
.titlebar {
  height: 26px;
  flex: none;
  display: flex;
  align-items: center;
  padding-left: 2px;
  box-sizing: border-box;
  background: linear-gradient(#0a5be0 0, #2a86f2 3px, #0a62ea 8px, #0353e0 20px, #0040b8 25px, #00349a 26px);
}
.applogo { width: 16px; height: 17px; margin-right: 4px; }
.titletext {
  font: bold 13.330px/16px "Liberation Mono", monospace;
  color: #fff;
  white-space: pre;
  margin-bottom: 2px;
}
.titletext b { font: bold 14px/16px "Noto Sans CJK SC", sans-serif; }
.winbtns { margin-left: auto; display: flex; gap: 3px; padding-right: 2px; margin-bottom: 1px; }
.wb {
  width: 20px; height: 20px;
  box-sizing: border-box;
  border: 1px solid #fff;
  border-radius: 3px;
  background: radial-gradient(circle at 30% 30%, #7aa4f2, #2a58d8 70%);
  display: flex; align-items: center; justify-content: center;
  position: relative;
}
.wb.close { background: radial-gradient(circle at 30% 30%, #f0a080, #d84a20 70%); }
.wb svg { width: 18px; height: 18px; }
.g-min { width: 7px; height: 3px; background: #fff; margin: 8px 4px 0 0; }
.g-res { width: 9px; height: 8px; border: 1.500px solid #fff; border-top-width: 2px; box-sizing: border-box; }

/* Menu */
.menubar {
  height: 23px;
  flex: none;
  display: flex;
  align-items: center;
  gap: 16px;
  padding-left: 5px;
  padding-bottom: 3px;
  box-sizing: border-box;
  background: linear-gradient(90deg, #dfe0ec, #f6f6f9 70%);
  font-size: 12px;
  color: #111;
  position: relative;
}
.menubar .dots { margin-right: -8px; }
.mi { white-space: nowrap; line-height: 16px; width: 42px; }
.mi:nth-of-type(3), .mi:nth-of-type(4) { width: 72px; }
.mi em { font: 10px "Liberation Mono", monospace; margin-left: 3px; letter-spacing: -1px; }
.mdi { margin-left: auto; display: flex; gap: 5px; padding-right: 4px; }
.mdi svg { width: 12px; height: 12px; }

.dots {
  width: 2px;
  height: 14px;
  flex: none;
  margin: 0 4px 0 3px;
  background: repeating-linear-gradient(#555 0 2px, transparent 2px 4px);
  display: block;
}

/* Toolbars */
.tbrow {
  flex: none;
  display: flex;
  background: linear-gradient(90deg, #e6e6f0, #f6f6f9);
  box-sizing: border-box;
}
.tbrow.one { height: 26px; }
.tbrow.two { height: 25px; }
.tb {
  display: flex;
  align-items: center;
  height: 24px;
  border-radius: 3px;
  background: linear-gradient(#f6f6fa 0, #e7e7f0 50%, #c7c7da 85%, #9d9dba 100%);
  box-sizing: border-box;
  position: relative;
}
.w1 { width: 236px; margin-left: 3px; }
.w2 { width: 491px; margin-left: 3px; }
.w3 { width: 186px; margin-left: 2px; }
.w4 { width: 718px; margin-left: 3px; }
.w5 { width: 716px; margin-left: 3px; border-radius: 3px 0 0 3px; }
.tbrow.two .tb { height: 25px; }
.b { width: 22px; height: 22px; flex: none; display: flex; align-items: center; justify-content: center; }
.b svg { width: 16px; height: 16px; }
.b.big svg { width: 18px; height: 18px; }
.b.lg svg { width: 19px; height: 19px; }
.b.dd { width: 28.500px; }
.b.sel {
  box-sizing: border-box;
  border: 1px solid #e8952e;
  background: #fdebc4;
  height: 22px;
}
.tri {
  width: 0; height: 0;
  border: 3px solid transparent;
  border-top: 3px solid #111;
  border-bottom: 0;
  margin-left: 2px;
  display: block;
}
.sep {
  width: 1px;
  height: 17px;
  margin: 0 2.500px;
  flex: none;
  background: #9a9ab2;
  box-shadow: 1px 0 0 #fff;
  display: block;
}
.chev {
  position: absolute;
  right: 0; top: 0; bottom: 0;
  width: 11px;
  border-radius: 0 3px 3px 0;
  background: linear-gradient(#c6c6d8, #8c8cab);
}
.chev::after {
  content: "";
  position: absolute;
  left: 2px; bottom: 4px;
  width: 7px; height: 1px;
  background: #111;
  box-shadow: none;
}
.chev::before {
  content: "";
  position: absolute;
  left: 3px; bottom: 0;
  border: 3px solid transparent;
  border-top: 3px solid #111;
  border-bottom: 0;
}
.combo {
  height: 19px;
  display: flex;
  background: #fff;
  flex: none;
  font-size: 12px;
  line-height: 19px;
  color: #222;
}
.cv { flex: 1; padding-left: 3px; }
.ca {
  width: 12px;
  background: linear-gradient(#fff, #e4e4ee);
  border-left: 1px solid #c4c4d4;
  position: relative;
}
.ca::after {
  content: "";
  position: absolute;
  left: 3px; top: 8px;
  border: 3px solid transparent;
  border-top: 3px solid #111;
  border-bottom: 0;
}
.c1 { width: 98px; margin-left: 1px; }
.c2 { width: 197px; margin-left: 2px; }
.c3 { width: 199px; margin-left: 3px; margin-right: 1px; }

.k {
  width: 22px;
  flex: none;
  display: flex;
  flex-direction: column;
  align-items: center;
  height: 22px;
}
.k svg { width: 18px; height: 12px; flex: none; }
.k small {
  font: 9px/9px "Liberation Sans", sans-serif;
  color: #111;
  white-space: nowrap;
  letter-spacing: -.2px;
}
.k small.tiny { font-size: 8px; letter-spacing: -.3px; }
.k.off small { color: #9a9ab0; }
.w5 .dots { margin: 0 1px 0 3px; }
.w2 .dots, .w3 .dots { margin: 0 3px 0 2px; }

/* Main */
.main { flex: 1; display: flex; min-height: 0; }
.nav {
  width: 180px;
  flex: none;
  display: flex;
  flex-direction: column;
  box-sizing: border-box;
  border-left: 1px solid #8c8cab;
  border-right: 1px solid #8c8cab;
  background: #fff;
}
.navhead {
  height: 24px;
  flex: none;
  display: flex;
  align-items: center;
  box-sizing: border-box;
  padding-bottom: 1px;
  background: linear-gradient(#f4f4f8, #c8c8da);
  font-size: 12px;
}
.navhead strong { color: #111; margin-left: 5px; }
.pin { width: 10px; height: 12px; margin-left: auto; }
.navx { width: 10px; height: 10px; margin: 0 6px 0 8px; }
.navtitle {
  height: 24px;
  flex: none;
  padding-left: 5px;
  background: linear-gradient(#9a9ab8, #8585a8);
  color: #fff;
  font-size: 15px;
  font-weight: bold;
  line-height: 22px;
}
.navtools {
  height: 26px;
  flex: none;
  display: flex;
  align-items: center;
  padding: 0 0 2px 2px;
  background: linear-gradient(#f0f0f6, #cfcfdf);
  border-top: 1px solid #fff;
  box-sizing: border-box;
}
.n { width: 22px; height: 16px; flex: none; display: flex; justify-content: center; align-items: center; }
.n svg { width: 16px; height: 16px; }
.n.wide { width: 28px; }
.tree {
  flex: 1;
  position: relative;
  background: #fff;
  font-size: 12px;
  color: #111;
}
.treelines { position: absolute; left: -1px; top: 0; width: 180px; height: 310px; }
.treelines path { fill: none; stroke: #a8a890; stroke-dasharray: 1 1; }
.row { height: 16px; display: flex; align-items: center; white-space: nowrap; position: relative; line-height: 16px; box-sizing: border-box; }
.row svg { width: 16px; height: 16px; flex: none; }
.row span { margin-left: 5px; }
.row.l0 { padding-left: 5px; }
.row.l1 { padding-left: 24px; }
.row.l2 { padding-left: 43px; }
.row.l3 { padding-left: 77px; }
.row.sub svg { width: 11px; height: 13px; margin-left: 5px; }
.row.sub span { margin-left: 4px; }
.exp {
  width: 9px; height: 9px;
  box-sizing: border-box;
  margin-right: 5px;
  flex: none;
  display: block;
  border: 1px solid #8a8a78;
  background-color: #fff;
  background-repeat: no-repeat;
  background-position: center;
}
.exp.minus { background-image: linear-gradient(#000, #000); background-size: 5px 1px; }
.exp.plus { background-image: linear-gradient(#000, #000), linear-gradient(#000, #000); background-size: 5px 1px, 1px 5px; }
.exp.none { border: 0; background: none; }
.current { background: #ece9d8; padding: 0 1px; margin-left: 3px !important; }

.splitter {
  height: 6px;
  flex: none;
  background: #8c8cab;
  position: relative;
}
.splitter::after {
  content: "";
  position: absolute;
  left: 71px; top: 2px;
  width: 35px; height: 2px;
  background: repeating-linear-gradient(90deg, #fff 0 2px, #555 2px 3px, transparent 3px 4px);
}
.navbtn {
  height: 32px;
  flex: none;
  box-sizing: border-box;
  display: flex;
  align-items: center;
  padding-left: 5px;
  border-bottom: 1px solid #7a7a9c;
  background: linear-gradient(#e3e3ee, #a9a9c4);
  font-size: 13px;
  color: #000;
}
.navbtn.on { background: linear-gradient(#fde68f, #f09e20); }
.navbtn svg { width: 26px; height: 26px; margin-right: 3px; flex: none; }
.navbtn.foot { height: 35px; padding: 0 7px 0 0; justify-content: flex-end; border-bottom: 1px solid #8c8cab; }
.navbtn .more { width: 10px; height: 16px; margin: 0; }

/* Editor */
.editor {
  flex: 1;
  display: flex;
  flex-direction: column;
  min-width: 0;
  background: #e6e6f0;
  padding: 0 0 2px 5px;
}
.tabs {
  height: 26px;
  flex: none;
  display: flex;
  align-items: flex-end;
  margin-left: -5px;
  padding-left: 6px;
  background: linear-gradient(#fbfbfd, #eeeef4);
  position: relative;
}
.tab {
  height: 22px;
  width: 151px;
  box-sizing: border-box;
  display: flex;
  align-items: center;
  border: 1px solid #3a5fa8;
  border-bottom: 0;
  border-radius: 0 4px 0 0;
  background: linear-gradient(#fff, #d2d2e2);
  font-size: 12px;
  color: #111;
  white-space: nowrap;
  position: relative;
  padding-bottom: 1px;
}
.tab.active {
  width: 211px;
  background: linear-gradient(#fff 0, #ffe8bd 60%, #ffd590);
  padding-left: 28px;
  font-weight: normal;
}
.tab.active::before {
  content: "";
  position: absolute;
  left: -1px; top: -1px;
  width: 24px; height: 23px;
  background: linear-gradient(to bottom right, #f8f8fb 48%, #3a5fa8 48%, #3a5fa8 53%, transparent 53%);
}
.tab:not(.active) { padding-left: 8px; }
.tabdoc { width: 13px; height: 15px; flex: none; margin-right: 4px; }
.tab:not(.active) .tabdoc { width: 15px; height: 15px; margin-right: 3px; }
.tabt b { font: bold 11.670px "Liberation Mono", monospace; white-space: pre; }
.tabt { font-weight: bold; }
.tab:not(.active) .tabt { font-weight: normal; }
.tabt b.thin { font-weight: normal; font-size: 10px; margin-left: 7px; }
.tabx {
  width: 14px; height: 14px;
  margin-left: auto;
  margin-right: 5px;
  box-sizing: border-box;
  border: 1px solid #c0bba8;
  background: #fff7e6;
  display: flex; align-items: center; justify-content: center;
}
.tabx svg { width: 10px; height: 10px; }
.tabnav {
  margin-left: auto;
  align-self: center;
  display: flex;
  gap: 9px;
  padding-right: 5px;
}
.tabnav svg { width: 8px; height: 12px; }
.frame {
  flex: 1;
  min-height: 0;
  display: flex;
  box-sizing: border-box;
  border: 2px solid #f5b85a;
  padding: 1px 0 0 1px;
  box-shadow: -1px 0 0 #5a7ab0, 0 1px 0 #5a7ab0;
  background: #707080;
  margin-right: 2px;
}
.ladder { width: 1233px; height: 718px; flex: none; display: block; background: #fff; }
.w path { fill: none; stroke: #000; stroke-width: 1; shape-rendering: crispEdges; }
.cursor { fill: none; stroke: #000090; stroke-width: 2; shape-rendering: crispEdges; }
.t text { font: 13.200px "Liberation Sans", sans-serif; fill: #1b1b35; }
.cm, .cm text { font: 12.800px "Noto Sans CJK SC", sans-serif; fill: #008000; }
.ttl { font: 13px "Liberation Sans", sans-serif; fill: #2a8a70; }
.star { font: 11px "Liberation Sans", sans-serif; fill: #6b8f20; }
.vscroll {
  flex: 1;
  display: flex;
  flex-direction: column;
  align-items: center;
  gap: 1px;
  background: #f4f2ec;
  padding: 1px 0 3px;
  min-width: 0;
}
.sb {
  width: 14px; height: 15px;
  flex: none;
  box-sizing: border-box;
  border: 1px solid #eef3ff;
  border-radius: 2px;
  background: linear-gradient(#cfdcff, #b6c8f8);
  display: flex;
}
.sb svg { width: 12px; height: 13px; }
.track { flex: 1; }

/* Status */
.status {
  height: 19px;
  flex: none;
  display: grid;
  grid-template-columns: 390px 99px 87px 249px 108px 207px 170px 55px 40px 35px;
  background: linear-gradient(#ece9d8, #ece9d8 70%, #dfdcc9);
  font-size: 12px;
  color: #222;
  position: relative;
  line-height: 17px;
  border-top: 1px solid #aaa897;
  box-sizing: border-box;
}
.s { display: block; padding-left: 4px; border-left: 1px solid #c6c3b0; box-shadow: inset 1px 0 0 #fff; white-space: nowrap; }
.s0 { border-left: 0; box-shadow: none; }
.s4 { font-size: 10.500px; font-weight: normal; }
.s6 { padding-left: 7px; }
.s6 .mono { font-weight: normal; }
.s9 { color: #a5a394; }
.wm {
  position: absolute;
  left: 1288px;
  top: -9px;
  font: 17.500px/20px "Noto Sans CJK SC", "Liberation Sans", sans-serif;
  color: rgba(95, 95, 95, .55);
  white-space: nowrap;
}
```
